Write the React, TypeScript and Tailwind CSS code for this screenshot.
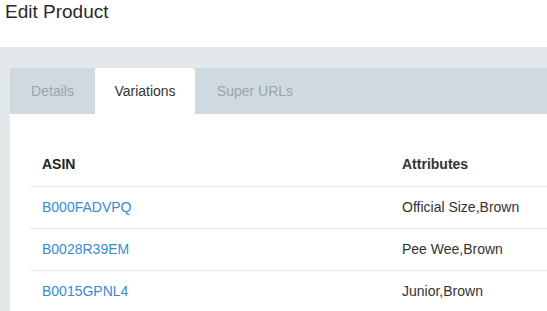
const TABS = [
  { label: "Details", width: "w-[85px]", active: false },
  { label: "Variations", width: "w-[100px]", active: true },
  { label: "Super URLs", width: "w-[120px]", active: false },
];

const ROWS = [
  { asin: "B000FADVPQ", attrs: "Official Size,Brown" },
  { asin: "B0028R39EM", attrs: "Pee Wee,Brown" },
  { asin: "B0015GPNL4", attrs: "Junior,Brown" },
];

export default function App() {
  return (
    <div className="h-[311px] w-[547px] overflow-hidden bg-white font-['Liberation_Sans',Arial,sans-serif] text-[#333]">
      <div className="h-[47px] pl-[5px]">
        <h1 className="text-[19px] leading-[24px] text-[#2b2b2b]">Edit Product</h1>
      </div>

      <div className="h-full bg-[#e3e8eb] pl-[10px] pt-[21px]">
        <div className="flex h-[46px] bg-[#cfd9df]">
          {TABS.map((tab) => (
            <div
              key={tab.label}
              className={`flex ${tab.width} items-center justify-center text-[14px] ${
                tab.active ? "rounded-t-[3px] bg-white text-[#333]" : "text-[#98a5ad]"
              }`}
            >
              {tab.label}
            </div>
          ))}
        </div>

        <div className="h-full bg-white pl-[20px] pt-[30px]">
          <table className="w-[600px] border-collapse text-left text-[14px]">
            <thead>
              <tr className="h-[42px]">
                <th className="w-[360px] px-3 font-bold text-[#222]">ASIN</th>
                <th className="px-3 font-bold text-[#333]">Attributes</th>
              </tr>
            </thead>
            <tbody>
              {ROWS.map((row) => (
                <tr key={row.asin} className="h-[42px] border-t border-[#e4ebf0]">
                  <td className="px-3 text-[#3a8ad4]">{row.asin}</td>
                  <td className="px-3 text-[#333]">{row.attrs}</td>
                </tr>
              ))}
            </tbody>
          </table>
        </div>
      </div>
    </div>
  );
}
